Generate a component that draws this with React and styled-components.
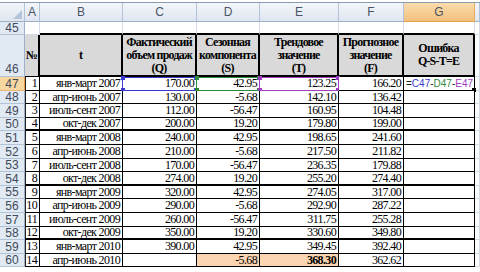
import React from 'react';
import styled, { createGlobalStyle } from 'styled-components';

// Page reset
const GlobalStyle = createGlobalStyle`
  html, body {
    margin: 0;
    padding: 0;
    background: #fff;
  }
  body {
    width: 480px;
    height: 272px;
    overflow: hidden;
  }
`;

const COL_WIDTHS = [25, 15, 83, 74, 63, 79, 65, 71];
const ROW_HEIGHTS = [14, 13, 14, 13, 14, 14, 13, 14, 13, 14, 14, 13, 14, 13];

const GRID = '#d4dce8';
const HEAD_LINE = '#b3c3d7';

// Sheet grid
const Sheet = styled.div`
  display: grid;
  grid-template-columns: ${COL_WIDTHS.map((w) => w + 'px').join(' ')} 1fr;
  grid-template-rows: 19px 13px 42px ${ROW_HEIGHTS.map((h) => h + 'px').join(' ')};
  margin-top: 2px;
  border-top: 1px solid #8c9aae;
  width: 480px;
`;

const Corner = styled.div`
  position: relative;
  box-sizing: border-box;
  background: linear-gradient(to bottom, #f2f5fa, #dfe6f0);
  border-right: 1px solid ${HEAD_LINE};
  border-bottom: 1px solid #9eb0c6;

  &::after {
    content: '';
    position: absolute;
    right: 2px;
    bottom: 2px;
    border-left: 9px solid transparent;
    border-bottom: 9px solid #b5c5d9;
  }
`;

const ColHead = styled.div`
  box-sizing: border-box;
  display: flex;
  align-items: center;
  justify-content: center;
  background: ${(p) =>
    p.$active
      ? 'linear-gradient(to bottom, #f9dcae, #f2c07c)'
      : 'linear-gradient(to bottom, #f3f6fa, #dfe6f0)'};
  border-right: 1px solid ${(p) => (p.$active ? '#e8ad62' : HEAD_LINE)};
  border-bottom: 1px solid ${(p) => (p.$active ? '#e5a04a' : '#9eb0c6')};
  font-family: 'Liberation Sans', Arial, sans-serif;
  font-size: 12px;
  color: #4a5564;
`;

const RowHead = styled.div`
  box-sizing: border-box;
  display: flex;
  align-items: ${(p) => (p.$tall ? 'flex-end' : 'center')};
  justify-content: center;
  padding-bottom: ${(p) => (p.$tall ? '1px' : '0')};
  background: ${(p) => (p.$active ? '#f7d6a0' : '#e1e9f3')};
  border-right: 1px solid ${(p) => (p.$active ? '#e5a04a' : '#9eb0c6')};
  border-bottom: 1px solid ${(p) => (p.$active ? '#e8b878' : HEAD_LINE)};
  font-family: 'Liberation Sans', Arial, sans-serif;
  font-size: 12px;
  line-height: 12px;
  color: #3f4b5c;
`;

const Blank = styled.div`
  box-sizing: border-box;
  background: #fff;
  border-right: 1px solid ${GRID};
  border-bottom: ${(p) => (p.$rule ? '2px solid #000' : `1px solid ${GRID}`)};
`;

const HeadCell = styled.div`
  box-sizing: border-box;
  display: flex;
  flex-direction: column;
  align-items: center;
  justify-content: center;
  overflow: hidden;
  background: #d9d9d9;
  border-right: 2px solid #000;
  border-bottom: ${(p) => (p.$first ? '1px' : '2px')} solid #000;
  font-family: 'Liberation Serif', 'Times New Roman', serif;
  font-size: 12px;
  font-weight: 700;
  letter-spacing: -0.8px;
  line-height: 13px;
  text-align: center;
  color: #000;
  white-space: nowrap;
`;

const Cell = styled.div`
  position: relative;
  box-sizing: border-box;
  display: flex;
  align-items: center;
  justify-content: ${(p) =>
    p.$align === 'left' ? 'flex-start' : p.$align === 'center' ? 'center' : 'flex-end'};
  padding: 0 2px;
  background: ${(p) => p.$fill || '#fff'};
  border-left: ${(p) => (p.$lead ? '1px solid #222' : 'none')};
  border-right: 1px solid #000;
  border-bottom: ${(p) => (p.$thick ? '2px' : '1px')} solid #000;
  font-family: 'Liberation Serif', 'Times New Roman', serif;
  font-size: 12px;
  letter-spacing: -0.65px;
  line-height: 11px;
  font-weight: ${(p) => (p.$bold ? 700 : 400)};
  color: #000;
  white-space: nowrap;
`;

const Formula = styled.span`
  font-family: 'Liberation Sans', Arial, sans-serif;
  font-size: 10px;
  letter-spacing: 0;
  color: ${(p) => p.$tint || '#222'};
`;

// coloured range frames shown while editing the formula
const RefFrame = styled.div`
  position: absolute;
  top: 0;
  left: -1px;
  right: -1px;
  bottom: -1px;
  border: 1px solid ${(p) => p.$color};
  pointer-events: none;
`;

const Handle = styled.i`
  position: absolute;
  width: 4px;
  height: 4px;
  background: ${(p) => p.$color};
  ${(p) => (p.$y === 'top' ? 'top: -2px;' : 'bottom: -2px;')}
  ${(p) => (p.$x === 'left' ? 'left: -2px;' : 'right: -2px;')}
`;

const FillHandle = styled.i`
  position: absolute;
  right: -2px;
  bottom: -2px;
  width: 4px;
  height: 4px;
  background: #000;
`;

const REF_COLORS = {
  C: '#3a3ad0',
  D: '#2f8a3a',
  E: '#9a3fc0',
};

const HEADERS = [
  ['№'],
  ['t'],
  ['Фактический', 'объем продаж', '(Q)'],
  ['Сезонная', 'компонента', '(S)'],
  ['Трендовое', 'значение', '(T)'],
  ['Прогнозное', 'значение', '(F)'],
  ['Ошибка', 'Q-S-T=E'],
];

const ROWS = [
  [1, 'янв-март 2007', '170.00', '42.95', '123.25', '166.20'],
  [2, 'апр-июнь 2007', '130.00', '-5.68', '142.10', '136.42'],
  [3, 'июль-сент 2007', '112.00', '-56.47', '160.95', '104.48'],
  [4, 'окт-дек 2007', '200.00', '19.20', '179.80', '199.00'],
  [5, 'янв-март 2008', '240.00', '42.95', '198.65', '241.60'],
  [6, 'апр-июнь 2008', '210.00', '-5.68', '217.50', '211.82'],
  [7, 'июль-сент 2008', '170.00', '-56.47', '236.35', '179.88'],
  [8, 'окт-дек 2008', '274.00', '19.20', '255.20', '274.40'],
  [9, 'янв-март 2009', '320.00', '42.95', '274.05', '317.00'],
  [10, 'апр-июнь 2009', '290.00', '-5.68', '292.90', '287.22'],
  [11, 'июль-сент 2009', '260.00', '-56.47', '311.75', '255.28'],
  [12, 'окт-дек 2009', '350.00', '19.20', '330.60', '349.80'],
  [13, 'янв-март 2010', '390.00', '42.95', '349.45', '392.40'],
  [14, 'апр-июнь 2010', '', '-5.68', '368.30', '362.62'],
];

const LETTERS = ['A', 'B', 'C', 'D', 'E', 'F', 'G'];
const PEACH = '#fbd4b2';

const Frame = ({ color }) => (
  <RefFrame $color={color}>
    <Handle $color={color} $x="left" $y="top" />
    <Handle $color={color} $x="right" $y="top" />
    <Handle $color={color} $x="left" $y="bottom" />
    <Handle $color={color} $x="right" $y="bottom" />
  </RefFrame>
);

const DataRow = ({ row, index }) => {
  const [num, period, q, s, t, f] = row;
  const thick = index === 3 || index === 7 || index === 11;
  const first = index === 0;
  const last = index === ROWS.length - 1;
  const rowNo = 47 + index;

  return (
    <>
      <RowHead $active={first}>{rowNo}</RowHead>
      <Cell $lead $thick={thick}>{num}</Cell>
      <Cell $thick={thick}>{period}</Cell>
      <Cell $thick={thick}>
        {q}
        {first && <Frame color={REF_COLORS.C} />}
      </Cell>
      <Cell $thick={thick} $fill={last ? PEACH : undefined}>
        {s}
        {first && <Frame color={REF_COLORS.D} />}
      </Cell>
      <Cell $thick={thick} $fill={last ? PEACH : undefined} $bold={last}>
        {t}
        {first && <Frame color={REF_COLORS.E} />}
      </Cell>
      <Cell $thick={thick}>{f}</Cell>
      <Cell $thick={thick} $align="left">
        {first && (
          <>
            <Formula>=</Formula>
            <Formula $tint={REF_COLORS.C}>C47</Formula>
            <Formula>-</Formula>
            <Formula $tint={REF_COLORS.D}>D47</Formula>
            <Formula>-</Formula>
            <Formula $tint={REF_COLORS.E}>E47</Formula>
            <FillHandle />
          </>
        )}
      </Cell>
      <Blank />
    </>
  );
};

const App = () => {
  return (
    <>
      <GlobalStyle />
      <Sheet>
        <Corner />
        {LETTERS.map((l) => (
          <ColHead key={l} $active={l === 'G'}>
            {l}
          </ColHead>
        ))}
        <ColHead />

        <RowHead>45</RowHead>
        {LETTERS.map((l) => (
          <Blank key={l} $rule={l !== 'A'} />
        ))}
        <Blank />

        <RowHead $tall>46</RowHead>
        {HEADERS.map((lines, i) => (
          <HeadCell key={i} $first={i === 0}>
            {lines.map((line) => (
              <div key={line}>{line}</div>
            ))}
          </HeadCell>
        ))}
        <Blank />

        {ROWS.map((row, i) => (
          <DataRow key={i} row={row} index={i} />
        ))}
      </Sheet>
    </>
  );
};

export default App;
